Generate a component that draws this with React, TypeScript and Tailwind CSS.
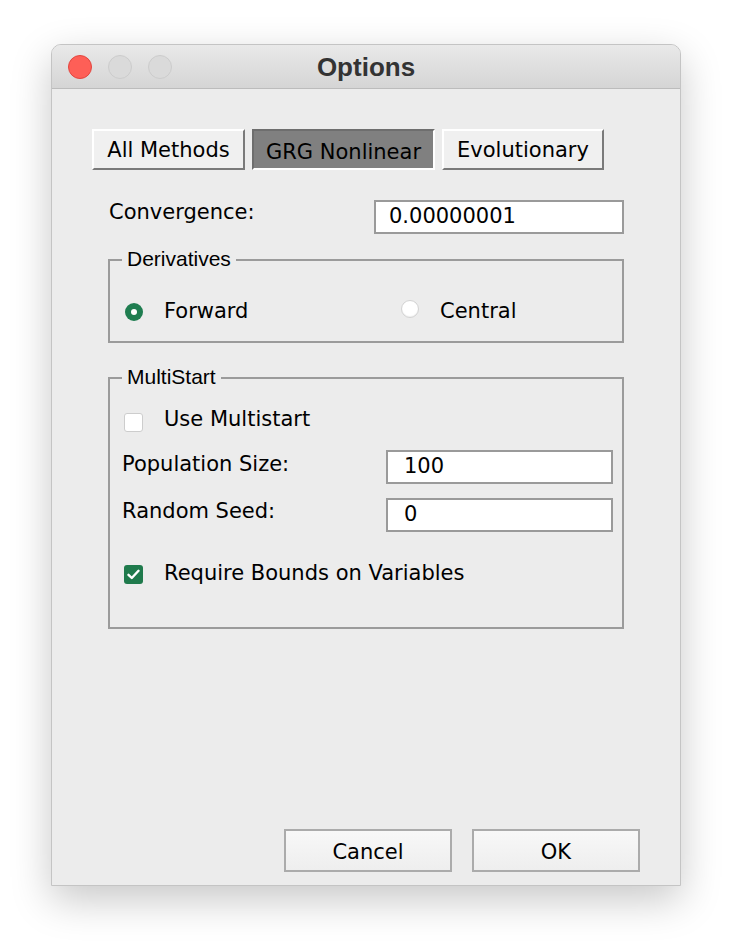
import React, { useState } from 'react';

const ui = "font-['DejaVu_Sans',sans-serif]";

const Tab: React.FC<{ label: string; width: string; active?: boolean }> = ({ label, width, active }) => (
  <div
    className={`${width} h-[41px] flex items-center justify-center text-[21px] text-black border-2 ${
      active
        ? 'bg-[#808080] border-t-[#6e6e6e] border-l-[#6e6e6e] border-b-white border-r-white'
        : 'bg-[#f0f0f0] border-t-white border-l-white border-b-[#7a7a7a] border-r-[#7a7a7a]'
    }`}
  >
    <span className={active ? 'pt-[6px]' : 'pt-[3px]'}>{label}</span>
  </div>
);

const Field: React.FC<{ value: string; width: string; pad: string }> = ({ value, width, pad }) => (
  <div className={`${width} h-[34px] bg-white border-2 border-[#9a9a9a] flex items-center ${pad} text-[21px] text-black`}>
    {value}
  </div>
);

const Group: React.FC<{ title: string; height: string; children: React.ReactNode }> = ({ title, height, children }) => (
  <div className={`relative ${height} border-2 border-[#9b9b9b]`}>
    {/* legend over the top border */}
    <span className="absolute -top-[14px] left-[12px] bg-[#ececec] px-[5px] text-[21px] leading-[24px] text-black font-['Liberation_Sans',sans-serif]">
      {title}
    </span>
    {children}
  </div>
);

const Radio: React.FC<{ checked?: boolean }> = ({ checked }) =>
  checked ? (
    <span className="w-[18px] h-[18px] rounded-full bg-[#1f7d50] flex items-center justify-center">
      <span className="w-[6px] h-[6px] rounded-full bg-white" />
    </span>
  ) : (
    <span className="w-[18px] h-[18px] rounded-full bg-white border border-[#d2d2d2] shadow-[inset_0_-1px_1px_rgba(0,0,0,0.06)]" />
  );

const Check: React.FC<{ checked?: boolean }> = ({ checked }) =>
  checked ? (
    <span className="w-[19px] h-[19px] rounded-[3px] bg-[#1f7a4c] flex items-center justify-center">
      <svg width="13" height="11" viewBox="0 0 13 11" fill="none">
        <path d="M1.5 5.8 L4.8 9 L11.5 1.8" stroke="white" strokeWidth="2.4" strokeLinecap="round" strokeLinejoin="round" />
      </svg>
    </span>
  ) : (
    <span className="w-[19px] h-[19px] rounded-[3px] bg-white border border-[#cdcdcd]" />
  );

const Button: React.FC<{ label: string }> = ({ label }) => (
  <div className="w-[168px] h-[43px] border-2 border-[#ababab] bg-gradient-to-b from-[#f8f8f8] to-[#eeeeee] flex items-center justify-center text-[21px] text-black">
    <span className="pt-[5px]">{label}</span>
  </div>
);

const App: React.FC = () => {
  const [method] = useState('GRG Nonlinear');

  return (
    <div className={`w-[732px] h-[946px] bg-white pt-[44px] pl-[51px] ${ui}`}>
      <div className="w-[630px] h-[842px] flex flex-col rounded-t-[10px] border border-[#c4c4c4] bg-[#ececec] shadow-[0_14px_40px_rgba(0,0,0,0.22)] overflow-hidden">
        {/* Title bar */}
        <div className="h-[44px] shrink-0 grid grid-cols-[1fr_auto_1fr] items-center bg-gradient-to-b from-[#e9e9e9] to-[#d5d5d5] border-b border-[#bcbcbc]">
          <div className="flex items-center gap-[16px] pl-[16px]">
            <span className="w-[24px] h-[24px] rounded-full bg-[#fe5f57] border border-[#e2463f]" />
            <span className="w-[24px] h-[24px] rounded-full bg-[#dadada] border border-[#cccccc]" />
            <span className="w-[24px] h-[24px] rounded-full bg-[#dadada] border border-[#cccccc]" />
          </div>
          <div className="text-[26px] font-bold text-[#333] font-['Liberation_Sans',sans-serif] leading-none">Options</div>
          <div />
        </div>

        {/* Content */}
        <div className="flex-1 flex flex-col pt-[40px]">
          <div className="flex gap-[7px] pl-[40px]">
            <Tab label="All Methods" width="w-[153px]" active={method === 'All Methods'} />
            <Tab label="GRG Nonlinear" width="w-[183px]" active={method === 'GRG Nonlinear'} />
            <Tab label="Evolutionary" width="w-[162px]" active={method === 'Evolutionary'} />
          </div>

          <div className="mt-[30px] flex items-center pl-[57px]">
            <span className="w-[265px] text-[21px] text-black -mt-[9px]">Convergence:</span>
            <Field value="0.00000001" width="w-[250px]" pad="pl-[13px]" />
          </div>

          <div className="mt-[25px] ml-[56px] w-[516px]">
            <Group title="Derivatives" height="h-[84px]">
              <div className="flex items-center pt-[35px] pl-[15px] text-[21px] text-black">
                <div className="w-[276px] flex items-center gap-[21px]">
                  <Radio checked />
                  <span>Forward</span>
                </div>
                <div className="flex items-center gap-[21px]">
                  <span className="-mt-[5px] flex"><Radio /></span>
                  <span>Central</span>
                </div>
              </div>
            </Group>
          </div>

          <div className="mt-[34px] ml-[56px] w-[516px]">
            <Group title="MultiStart" height="h-[252px]">
              <div className="flex flex-col pl-[12px] pt-[30px] text-[21px] text-black">
                <div className="flex items-center gap-[21px] pl-[2px]">
                  <Check />
                  <span className="-mt-[5px]">Use Multistart</span>
                </div>
                <div className="mt-[14px] flex items-center">
                  <span className="w-[264px] -mt-[4px]">Population Size:</span>
                  <Field value="100" width="w-[227px]" pad="pl-[16px]" />
                </div>
                <div className="mt-[14px] flex items-center">
                  <span className="w-[264px] -mt-[6px]">Random Seed:</span>
                  <Field value="0" width="w-[227px]" pad="pl-[16px]" />
                </div>
                <div className="mt-[28px] flex items-center gap-[21px] pl-[2px]">
                  <Check checked />
                  <span className="-mt-[2px]">Require Bounds on Variables</span>
                </div>
              </div>
            </Group>
          </div>

          <div className="flex-1" />

          <div className="flex gap-[20px] pl-[232px] pb-[13px]">
            <Button label="Cancel" />
            <Button label="OK" />
          </div>
        </div>
      </div>
    </div>
  );
};

export default App;
